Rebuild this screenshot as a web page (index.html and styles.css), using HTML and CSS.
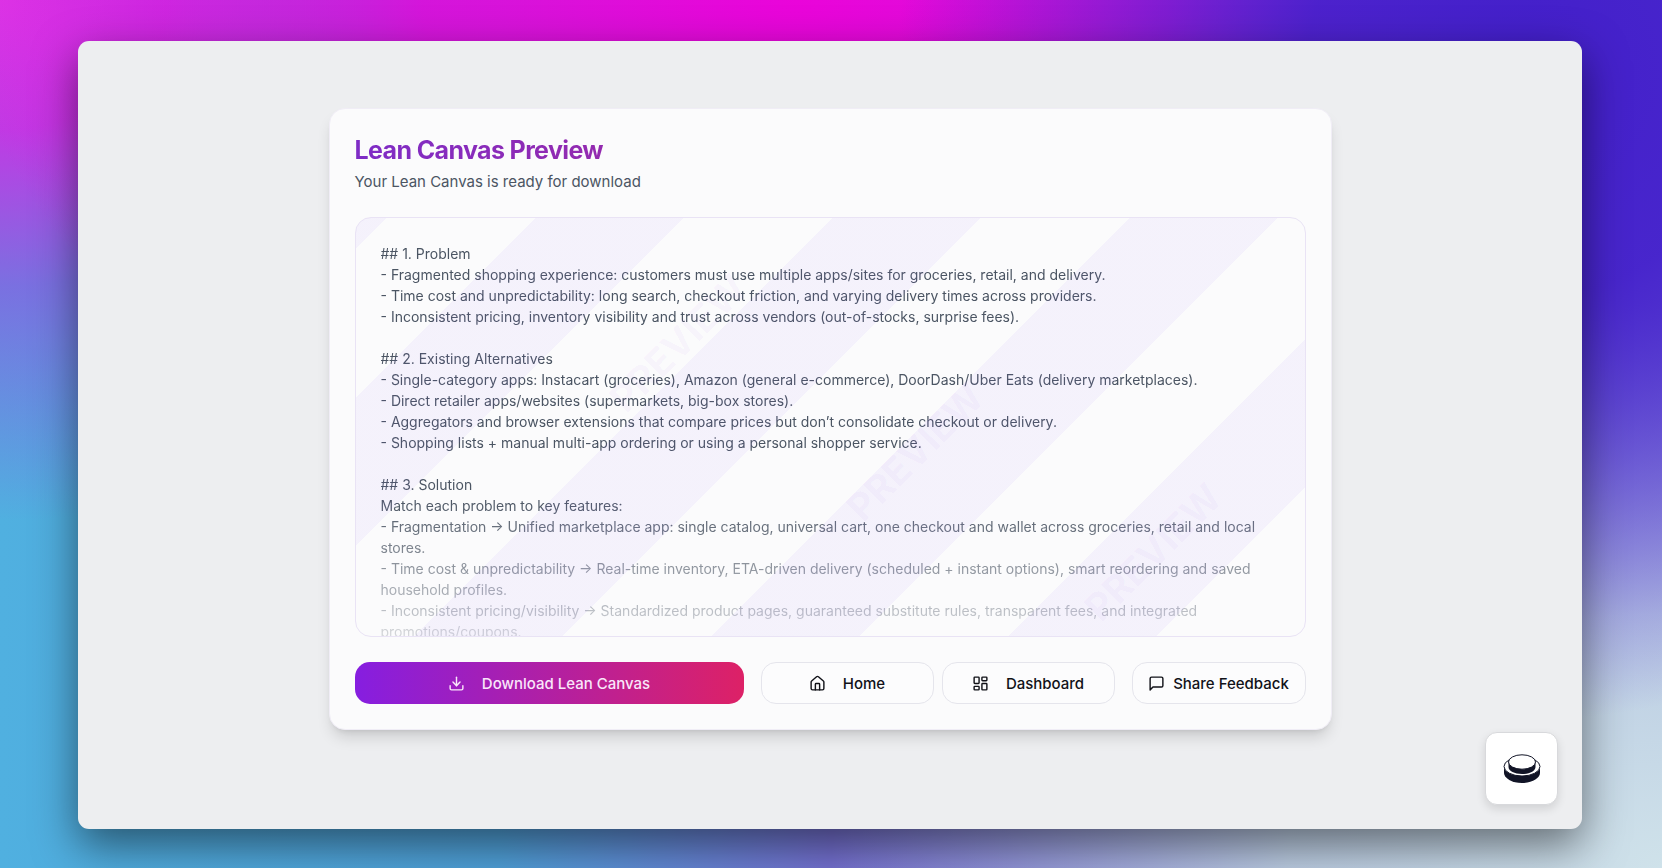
FILE: index.html
```html
<!DOCTYPE html>
<html lang="en">
<head>
  <meta charset="UTF-8">
  <meta name="viewport" content="width=device-width, initial-scale=1.0">
  <title>Lean Canvas Preview</title>
  <link rel="stylesheet" href="styles.css">
</head>
<body>
  <div class="window">
    <main class="card">
      <header class="card-header">
        <h1>Lean Canvas Preview</h1>
        <p>Your Lean Canvas is ready for download</p>
      </header>

      <section class="preview">
        <div class="preview-text">## 1. Problem
- Fragmented shopping experience: customers must use multiple apps/sites for groceries, retail, and delivery.
- Time cost and unpredictability: long search, checkout friction, and varying delivery times across providers.
- Inconsistent pricing, inventory visibility and trust across vendors (out-of-stocks, surprise fees).

## 2. Existing Alternatives
- Single-category apps: Instacart (groceries), Amazon (general e-commerce), DoorDash/Uber Eats (delivery marketplaces).
- Direct retailer apps/websites (supermarkets, big-box stores).
- Aggregators and browser extensions that compare prices but don’t consolidate checkout or delivery.
- Shopping lists + manual multi-app ordering or using a personal shopper service.

## 3. Solution
Match each problem to key features:
- Fragmentation → Unified marketplace app: single catalog, universal cart, one checkout and wallet across groceries, retail and local stores.
- Time cost &amp; unpredictability → Real-time inventory, ETA-driven delivery (scheduled + instant options), smart reordering and saved household profiles.
- Inconsistent pricing/visibility → Standardized product pages, guaranteed substitute rules, transparent fees, and integrated promotions/coupons.</div>
        <div class="watermark" aria-hidden="true">
          <span class="mark mark-1">PREVIEW</span>
          <span class="mark mark-2">PREVIEW</span>
          <span class="mark mark-3">PREVIEW</span>
        </div>
      </section>

      <div class="actions">
        <button type="button" class="btn btn-primary">
          <svg class="icon" viewBox="0 0 24 24"><path d="M21 15v4a2 2 0 0 1-2 2H5a2 2 0 0 1-2-2v-4"/><path d="M7 10l5 5 5-5"/><path d="M12 15V3"/></svg>
          Download Lean Canvas
        </button>
        <div class="nav-buttons">
          <button type="button" class="btn">
            <svg class="icon" viewBox="0 0 24 24"><path d="M15 21v-8a1 1 0 0 0-1-1h-4a1 1 0 0 0-1 1v8"/><path d="M3 10a2 2 0 0 1 .709-1.528l7-5.999a2 2 0 0 1 2.582 0l7 5.999A2 2 0 0 1 21 10v9a2 2 0 0 1-2 2H5a2 2 0 0 1-2-2z"/></svg>
            Home
          </button>
          <button type="button" class="btn">
            <svg class="icon" viewBox="0 0 24 24"><rect width="7" height="9" x="3" y="3" rx="1"/><rect width="7" height="5" x="14" y="3" rx="1"/><rect width="7" height="9" x="14" y="12" rx="1"/><rect width="7" height="5" x="3" y="16" rx="1"/></svg>
            Dashboard
          </button>
        </div>
        <button type="button" class="btn btn-feedback">
          <svg class="icon" viewBox="0 0 24 24"><path d="M21 15a2 2 0 0 1-2 2H7l-4 4V5a2 2 0 0 1 2-2h14a2 2 0 0 1 2 2z"/></svg>
          Share Feedback
        </button>
      </div>
    </main>

    <button type="button" class="widget" aria-label="Open widget">
      <svg viewBox="0 0 38 30">
        <path d="M1 12v7c0 5 8 10 18 10s18-5 18-10v-7z" fill="#111426"/>
        <ellipse cx="19" cy="12.500" rx="18" ry="9.500" fill="#fff" stroke="#111426" stroke-width="1"/>
        <path d="M5.500 8v5c0 4 6 7 13.500 7s13.500-3 13.500-7V8z" fill="#111426"/>
        <ellipse cx="19" cy="8" rx="13.500" ry="7.200" fill="#fff" stroke="#111426" stroke-width="1"/>
      </svg>
    </button>
  </div>
</body>
</html>
```

FILE: styles.css
```css
* {
  margin: 0;
  padding: 0;
  box-sizing: border-box;
}

body {
  font-family: Inter, 'Liberation Sans', sans-serif;
  font-size: 15px;
  line-height: 21px;
  color: #4b5563;
  min-height: 100vh;
  display: flex;
  padding: 41px 80px 39px 78px;
  background:
    radial-gradient(ellipse 38% 75% at 92% 8%, #431fca 0%, rgba(68, 32, 204, 0.92) 35%, rgba(70, 36, 206, 0.5) 65%, rgba(74, 40, 208, 0) 100%),
    radial-gradient(ellipse 50% 60% at 48% 0%, #ea04da 0%, rgba(230, 4, 218, 0.85) 45%, rgba(220, 0, 220, 0) 100%),
    radial-gradient(ellipse 40% 60% at 0% 0%, #dc35e6 0%, rgba(205, 45, 228, 0.9) 25%, rgba(150, 70, 225, 0.6) 55%, rgba(110, 90, 225, 0) 100%),
    radial-gradient(ellipse 50% 65% at 100% 100%, #cfe2ea 0%, rgba(195, 215, 228, 0.9) 45%, rgba(170, 170, 228, 0) 100%),
    linear-gradient(90deg, #50b0e0 0%, #4fa0d8 30%, #7470d0 50%, #7468d4 100%);
}

.window {
  flex: 1;
  position: relative;
  display: flex;
  justify-content: center;
  align-items: flex-start;
  padding: 67px 24px 98px;
  background: #edeef0;
  border-radius: 11px;
  box-shadow: 0 16px 44px rgba(0, 0, 0, 0.5);
}

.card {
  width: 100%;
  max-width: 1003px;
  padding: 25px;
  background: #fbfbfc;
  border: 1px solid #f0edf6;
  border-radius: 16px;
  box-shadow: 0 10px 16px -4px rgba(0, 0, 0, 0.16), 0 4px 6px -4px rgba(0, 0, 0, 0.1);
}

.card-header {
  margin-bottom: 25px;
}

.card-header h1 {
  font-size: 25px;
  line-height: 33px;
  font-weight: 700;
  letter-spacing: -0.025em;
  margin-bottom: 4px;
  color: transparent;
  background: linear-gradient(90deg, #7e2cc6, #d0256f);
  -webkit-background-clip: text;
  background-clip: text;
}

.preview {
  position: relative;
  height: 420px;
  padding: 25px;
  overflow: hidden;
  border: 1px solid #e9e3f5;
  border-radius: 16px;
}

.preview-text {
  font-size: 14px;
  white-space: pre-wrap;
  -webkit-mask-image: linear-gradient(#000 64%, transparent 108%);
  mask-image: linear-gradient(#000 64%, transparent 108%);
}

/* stripes and marks lie over the text */
.watermark {
  position: absolute;
  inset: 0;
  pointer-events: none;
  background: repeating-linear-gradient(-45deg, transparent 0 105px, rgba(139, 92, 246, 0.06) 105px 210px);
}

.mark {
  position: absolute;
  font-size: 38px;
  line-height: 42px;
  font-weight: 700;
  color: rgba(147, 51, 234, 0.04);
  transform: translate(-50%, -50%) rotate(-45deg);
}

.mark-1 {
  left: 34%;
  top: 30%;
}

.mark-2 {
  left: 59%;
  top: 56%;
}

.mark-3 {
  left: 84%;
  top: 80%;
}

.actions {
  display: flex;
  gap: 17px;
  margin-top: 25px;
}

.btn {
  flex: 1;
  display: flex;
  align-items: center;
  justify-content: center;
  gap: 17px;
  height: 42px;
  font-family: inherit;
  font-size: 15px;
  line-height: 21px;
  font-weight: 500;
  color: #111218;
  white-space: nowrap;
  background: #fcfcfd;
  border: 1px solid #e5e5ec;
  border-radius: 15px;
  cursor: pointer;
}

.btn-primary {
  flex: 0 1 389px;
  color: #f9e6fa;
  background: linear-gradient(90deg, #861ee0, #dd2166);
  border: none;
}

.nav-buttons {
  flex: 1;
  display: flex;
  gap: 8px;
}

.btn-feedback {
  flex: 0 0 174px;
  gap: 8px;
}

.icon {
  width: 17px;
  height: 17px;
  fill: none;
  stroke: currentColor;
  stroke-width: 2;
  stroke-linecap: round;
  stroke-linejoin: round;
}

.widget {
  position: absolute;
  right: 24px;
  bottom: 24px;
  width: 73px;
  height: 73px;
  display: flex;
  align-items: center;
  justify-content: center;
  background: #fff;
  border: 1px solid #d8d9dc;
  border-radius: 12px;
  box-shadow: 0 4px 10px rgba(0, 0, 0, 0.12);
  cursor: pointer;
}

.widget svg {
  width: 38px;
  height: 30px;
}
```
